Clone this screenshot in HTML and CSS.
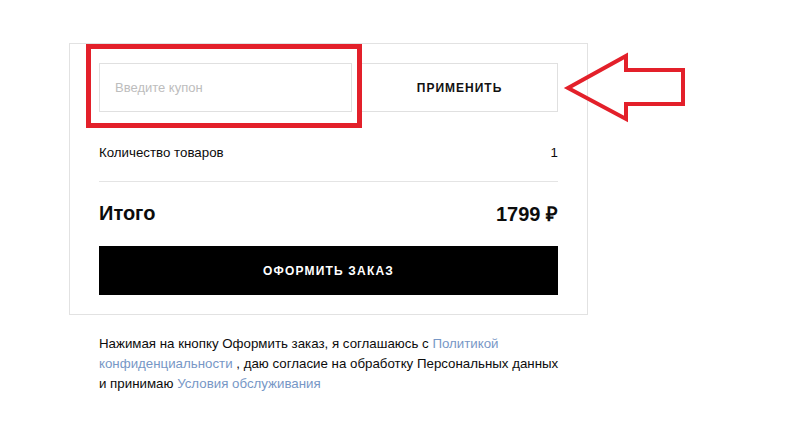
FILE: index.html
```html
<!DOCTYPE html>
<html lang="ru">
<head>
<meta charset="utf-8">
<title>Корзина</title>
<link rel="stylesheet" href="styles.css">
</head>
<body>
<div class="page">
  <div class="card">
    <div class="coupon">
      <input class="coupon-input" type="text" placeholder="Введите купон">
      <button class="coupon-btn" type="button">ПРИМЕНИТЬ</button>
    </div>
    <div class="row count">
      <span>Количество товаров</span>
      <span>1</span>
    </div>
    <div class="row total">
      <span>Итого</span>
      <span>1799 ₽</span>
    </div>
    <button class="order-btn" type="button">ОФОРМИТЬ ЗАКАЗ</button>
  </div>
  <p class="agree">Нажимая на кнопку Оформить заказ, я соглашаюсь с <a href="#">Политикой</a><br><a href="#">конфиденциальности</a> , даю согласие на обработку Персональных данных<br>и принимаю <a href="#">Условия обслуживания</a></p>
</div>
<svg class="annot" width="800" height="448" viewBox="0 0 800 448">
  <rect x="88.5" y="46.5" width="271" height="79" fill="none" stroke="#e3202a" stroke-width="5"/>
  <polygon points="568,88 626,56 626,70 683,70 683,104 626,104 626,119" fill="none" stroke="#e3202a" stroke-width="4" stroke-linejoin="miter"/>
</svg>
</body>
</html>
```

FILE: styles.css
```css
* { box-sizing: border-box; }
html, body { margin: 0; padding: 0; background: #fff; }
body {
  font-family: "Liberation Sans", Arial, sans-serif;
  color: #111;
  width: 800px;
  height: 448px;
  overflow: hidden;
  position: relative;
}
.page {
  padding: 43px 0 0 69px;
}
.card {
  width: 519px;
  border: 1px solid #e2e2e2;
  padding: 19px 29px 19px 29px;
}
.coupon {
  display: flex;
  gap: 9px;
  height: 49px;
}
.coupon-input {
  width: 253px;
  height: 49px;
  border: 1px solid #e0e0e0;
  padding: 0 15px;
  font-family: inherit;
  font-size: 13px;
  color: #333;
  outline: none;
}
.coupon-input::placeholder { color: #bdbdbd; }
.coupon-btn {
  flex: 1;
  height: 49px;
  background: #fff;
  border: 1px solid #e0e0e0;
  font-family: inherit;
  font-weight: bold;
  font-size: 12px;
  letter-spacing: 1px;
  color: #111;
  padding: 0;
}
.row {
  display: flex;
  justify-content: space-between;
  align-items: center;
}
.count {
  margin-top: 30px;
  height: 20px;
  font-size: 13.3px;
  color: #0c0c0c;
  box-sizing: content-box;
  padding-bottom: 19px;
  border-bottom: 1px solid #e4e4e4;
}
.total {
  margin-top: 21px;
  height: 20px;
  font-size: 20px;
  font-weight: bold;
  color: #0c0c0c;
}
.order-btn {
  display: block;
  width: 100%;
  margin-top: 23px;
  height: 49px;
  background: #000;
  border: none;
  color: #fff;
  font-family: inherit;
  font-weight: bold;
  font-size: 12px;
  letter-spacing: 1.2px;
  padding: 0;
}
.agree {
  margin: 19px 0 0 30px;
  font-size: 13.3px;
  line-height: 20px;
  color: #0c0c0c;
}
.agree a {
  color: #7797c6;
  text-decoration: none;
}
.annot {
  position: absolute;
  left: 0;
  top: 0;
  pointer-events: none;
}
```
